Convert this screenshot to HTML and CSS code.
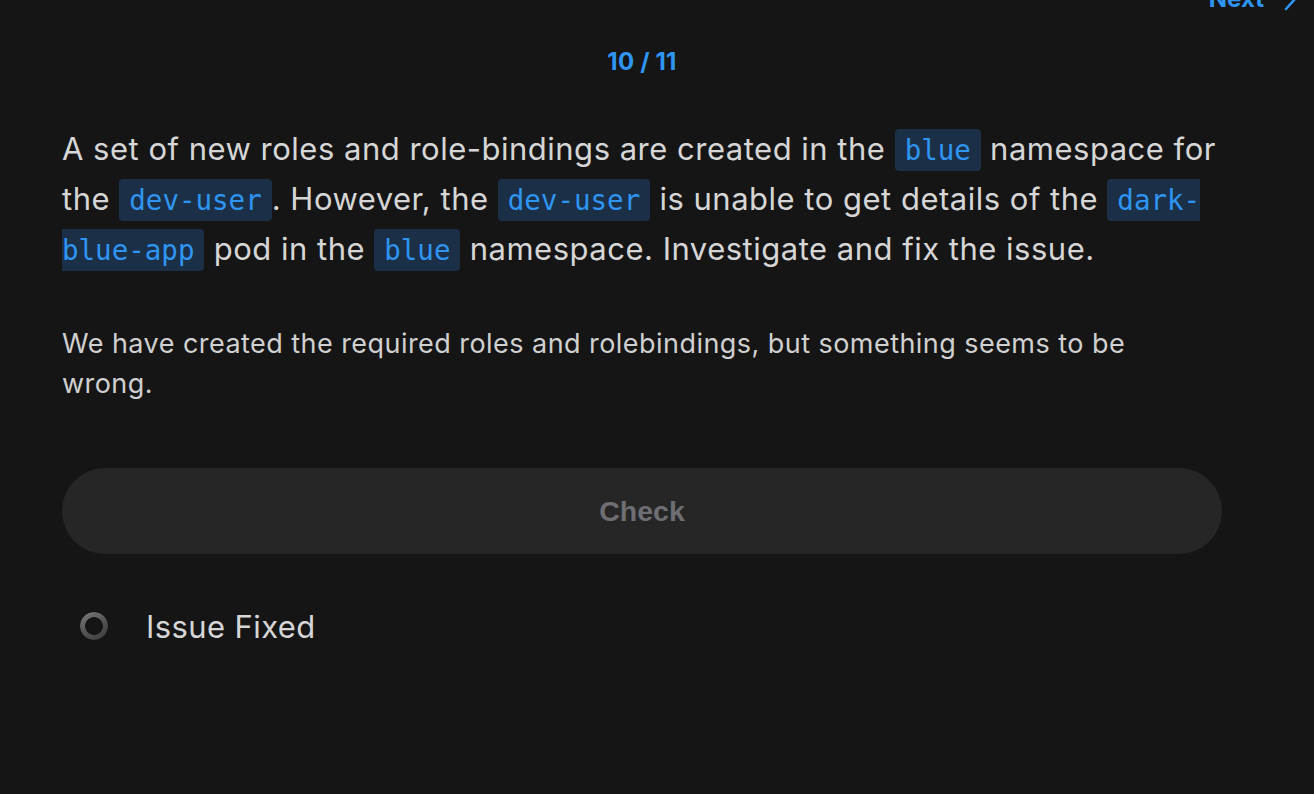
FILE: index.html
```html
<!DOCTYPE html>
<html lang="en">
<head>
<meta charset="utf-8">
<title>Question 10 / 11</title>
<link rel="stylesheet" href="styles.css">
</head>
<body>
<div class="page">
  <div class="topbar">
    <a class="next">Next
      <svg class="chev" width="14" height="24" viewBox="0 0 14 24"><path d="M2 2 L11 12 L2 22" fill="none" stroke="currentColor" stroke-width="2.6" stroke-linecap="round" stroke-linejoin="round"/></svg>
    </a>
  </div>
  <div class="counter">10 / 11</div>
  <p class="question">A set of new roles and role-bindings are created in the <code>blue</code> namespace for the <code>dev-user</code>. However, the <code>dev-user</code> is unable to get details of the <code>dark-blue-app</code> pod in the <code>blue</code> namespace. Investigate and fix the issue.</p>
  <p class="hint">We have created the required roles and rolebindings, but something seems to be wrong.</p>
  <button class="check">Check</button>
  <div class="task">
    <span class="radio"></span>
    <span class="task-label">Issue Fixed</span>
  </div>
</div>
</body>
</html>
```
FILE: styles.css
```css
html, body {
  margin: 0;
  padding: 0;
  background: #151515;
  height: 100%;
}
body {
  font-family: Inter, "Noto Sans", sans-serif;
  color: #d6d6d6;
  overflow: hidden;
}
.page {
  width: 1160px;
  margin-left: 62px;
  display: flex;
  flex-direction: column;
}
.topbar {
  display: flex;
  justify-content: flex-end;
  height: 30px;
  margin-top: -16px;
  margin-right: -76px;
}
.next {
  display: flex;
  align-items: center;
  gap: 20px;
  color: #2f95f2;
  font-weight: 700;
  font-size: 24px;
  line-height: 30px;
}
.chev {
  display: block;
}
.counter {
  margin-top: 33px;
  text-align: center;
  color: #2f95f2;
  font-weight: 700;
  font-size: 24px;
  letter-spacing: 0.2px;
  line-height: 30px;
}
.question {
  margin: 47px 0 0;
  font-size: 31px;
  letter-spacing: 0.5px;
  line-height: 50px;
}
code {
  font-family: "DejaVu Sans Mono", monospace;
  font-size: 27.5px;
  letter-spacing: 0;
  line-height: 1;
  color: #2f95f2;
  background: #1b3047;
  border-radius: 4px;
  padding: 5px 10px;
}
.hint {
  margin: 50px 0 0;
  max-width: 1110px;
  font-size: 27px;
  letter-spacing: 0.45px;
  line-height: 40px;
  color: #d0d0d0;
}
.check {
  margin-top: 64px;
  height: 86px;
  border: none;
  border-radius: 43px;
  background: #262626;
  color: #6e6e73;
  font-family: "Liberation Sans", Arial, sans-serif;
  font-weight: 700;
  font-size: 28.5px;
  padding: 0;
}
.task {
  margin-top: 52px;
  display: flex;
  align-items: center;
  height: 40px;
}
.radio {
  width: 28px;
  height: 28px;
  margin-left: 18px;
  border-radius: 50%;
  background: linear-gradient(150deg, #7c7c7c 0%, #555 50%, #3a3a3a 100%);
  -webkit-mask: radial-gradient(circle, transparent 8.5px, #000 9.2px);
  mask: radial-gradient(circle, transparent 8.5px, #000 9.2px);
}
.task-label {
  margin-left: 38px;
  font-size: 31px;
  letter-spacing: 0.4px;
  color: #d6d6d6;
}
```
